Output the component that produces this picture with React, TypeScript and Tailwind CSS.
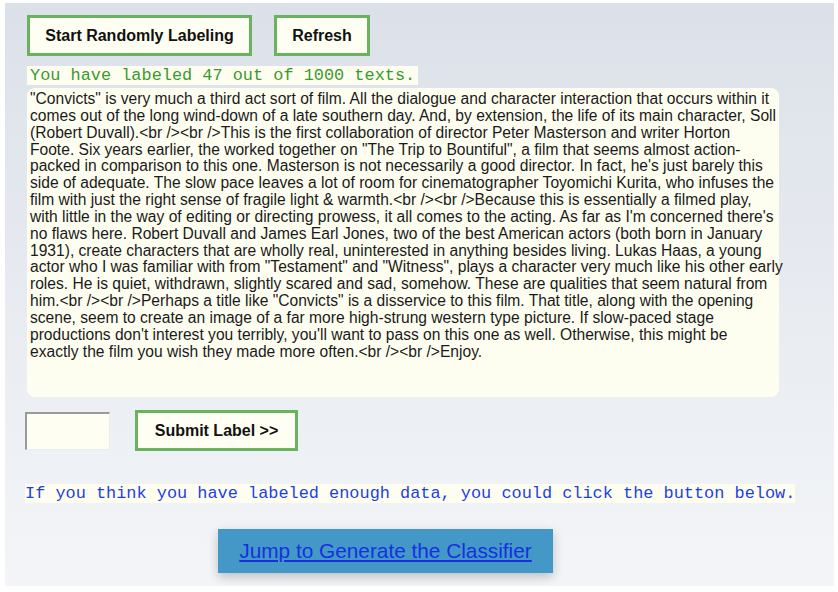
const lines = [
  '"Convicts" is very much a third act sort of film. All the dialogue and character interaction that occurs within it',
  'comes out of the long wind-down of a late southern day. And, by extension, the life of its main character, Soll',
  '(Robert Duvall).<br /><br />This is the first collaboration of director Peter Masterson and writer Horton',
  'Foote. Six years earlier, the worked together on "The Trip to Bountiful", a film that seems almost action-',
  "packed in comparison to this one. Masterson is not necessarily a good director. In fact, he's just barely this",
  'side of adequate. The slow pace leaves a lot of room for cinematographer Toyomichi Kurita, who infuses the',
  'film with just the right sense of fragile light & warmth.<br /><br />Because this is essentially a filmed play,',
  "with little in the way of editing or directing prowess, it all comes to the acting. As far as I'm concerned there's",
  'no flaws here. Robert Duvall and James Earl Jones, two of the best American actors (both born in January',
  '1931), create characters that are wholly real, uninterested in anything besides living. Lukas Haas, a young',
  'actor who I was familiar with from "Testament" and "Witness", plays a character very much like his other early',
  'roles. He is quiet, withdrawn, slightly scared and sad, somehow. These are qualities that seem natural from',
  'him.<br /><br />Perhaps a title like "Convicts" is a disservice to this film. That title, along with the opening',
  'scene, seem to create an image of a far more high-strung western type picture. If slow-paced stage',
  "productions don't interest you terribly, you'll want to pass on this one as well. Otherwise, this might be",
  'exactly the film you wish they made more often.<br /><br />Enjoy.',
];

const sans = "font-['Liberation_Sans',Arial,sans-serif]";
const mono = "font-['Liberation_Mono','Courier_New',monospace]";

function GreenButton({ label, width }: { label: string; width: string }) {
  return (
    <button
      className={`${sans} ${width} h-[41px] border-[3px] border-[#6ab35e] bg-[#fefef2] text-[16px] font-bold text-[#111]`}
    >
      {label}
    </button>
  );
}

export default function App() {
  return (
    <div className="w-[838px] h-[592px] bg-white pt-[3px] pl-[5px] pr-[4px] pb-[6px]">
      <div className="h-full bg-gradient-to-b from-[#dce1e9] to-[#f3f5f8] pl-[20px] pt-[12px]">
        <div className="flex gap-[22px] ml-[2px]">
          <GreenButton label="Start Randomly Labeling" width="w-[225px]" />
          <GreenButton label="Refresh" width="w-[96px]" />
        </div>

        <div className="mt-[9px] ml-[2px] h-[18px] leading-[18px]">
          <span className={`${mono} text-[16.9px] text-[#3a9a2e] bg-[#fefef0] px-[3px]`}>
            You have labeled 47 out of 1000 texts.
          </span>
        </div>

        <div
          className={`${sans} mt-[5px] ml-[2px] w-[752px] h-[309px] rounded-lg bg-[#fefef0] pt-[3px] pl-[3px] text-[15.6px] leading-[16.85px] text-[#1a1a1a]`}
        >
          {lines.map((l, i) => (
            <div key={i} className="whitespace-nowrap">
              {l}
            </div>
          ))}
        </div>

        <div className="mt-[13px] flex items-center gap-[25px]">
          <input
            className="w-[85px] h-[38px] bg-[#fefef2] border-t-2 border-l-2 border-b border-r border-t-[#9a9a9a] border-l-[#9a9a9a] border-b-[#ececec] border-r-[#ececec] outline-none"
          />
          <GreenButton label="Submit Label >>" width="w-[163px]" />
        </div>

        <div className="mt-[31px] h-[20px] leading-[20px]">
          <span className={`${mono} text-[16.9px] text-[#1d3fe6] bg-[#fefef0]`}>
            If you think you have labeled enough data, you could click the button below.
          </span>
        </div>

        <div className="mt-[27px] ml-[193px] w-[335px] h-[44px] flex items-center justify-center bg-[#4498c8] shadow-[0_4px_10px_rgba(0,0,0,0.22)]">
          <a href="#" className={`${sans} text-[20.8px] text-[#1530e0] underline`}>
            Jump to Generate the Classifier
          </a>
        </div>
      </div>
    </div>
  );
}
